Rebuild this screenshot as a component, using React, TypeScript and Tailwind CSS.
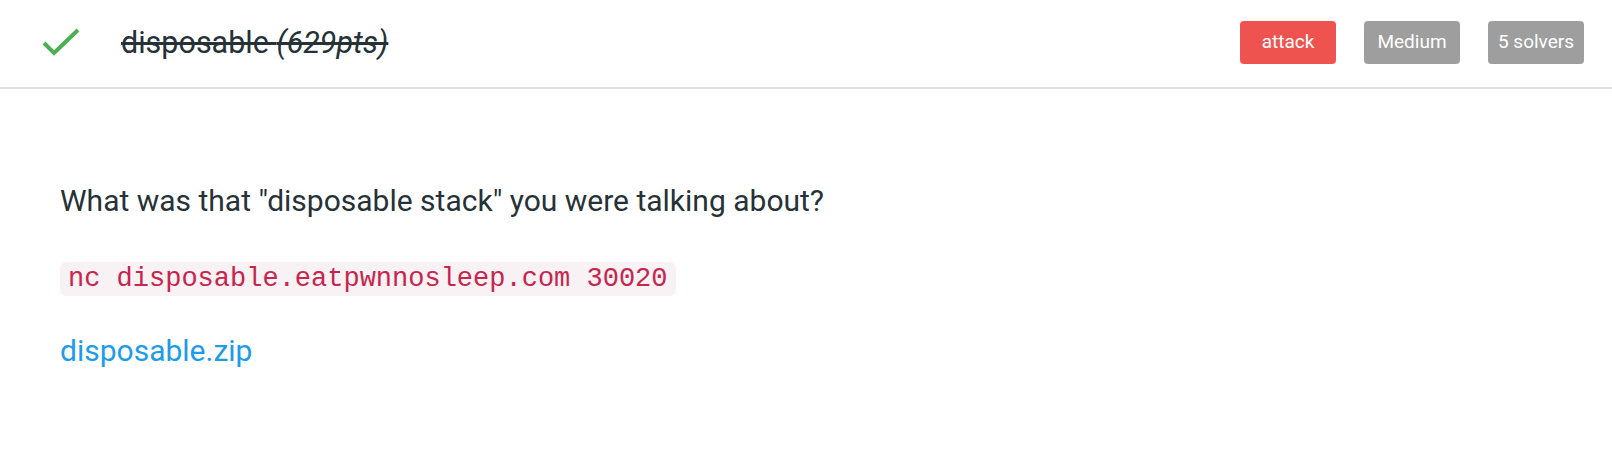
const badges = [
  { label: "attack", cls: "bg-[#ef5350]" },
  { label: "Medium", cls: "bg-[#9e9e9e]" },
  { label: "5 solvers", cls: "bg-[#9e9e9e]" },
];

const App = () => {
  return (
    <main className="min-h-[464px] w-full bg-white font-['Roboto',sans-serif] text-[#263238]">
      {/* header */}
      <div className="flex h-[89px] items-center border-b-2 border-[#e0e0e0] pr-[28px]">
        <div className="flex w-[121px] items-center pl-[41px] pb-[2px]">
          <svg width="40" height="30" viewBox="0 0 40 30" fill="none">
            <polyline
              points="3,15 13,25 37,2"
              stroke="#4caf50"
              strokeWidth="4"
              strokeLinecap="butt"
              strokeLinejoin="miter"
            />
          </svg>
        </div>
        <h2 className="flex-1 pb-[2px] text-[30.5px] leading-[36px] line-through">
          disposable <em>(629pts)</em>
        </h2>
        <div className="flex gap-x-[28px] pb-[3px]">
          {badges.map((b) => (
            <span
              key={b.label}
              className={`flex h-[43px] w-[96px] items-center justify-center rounded-[4px] text-[19px] text-white ${b.cls}`}
            >
              {b.label}
            </span>
          ))}
        </div>
      </div>

      {/* body */}
      <div className="pl-[60px]">
        <p className="mt-[94px] text-[30px] leading-[36px]">
          What was that "disposable stack" you were talking about?
        </p>
        <div className="mt-[43px]">
          <code className="inline-block rounded-[6px] bg-[#f9f2f4] px-[8px] py-[2px] font-['Liberation_Mono',monospace] text-[27px] leading-[30px] text-[#c7254e]">
            nc disposable.eatpwnnosleep.com 30020
          </code>
        </div>
        <a href="#" className="mt-[37px] block w-fit text-[30px] leading-[36px] text-[#1e9be9]">
          disposable.zip
        </a>
      </div>
    </main>
  );
};

export default App;
